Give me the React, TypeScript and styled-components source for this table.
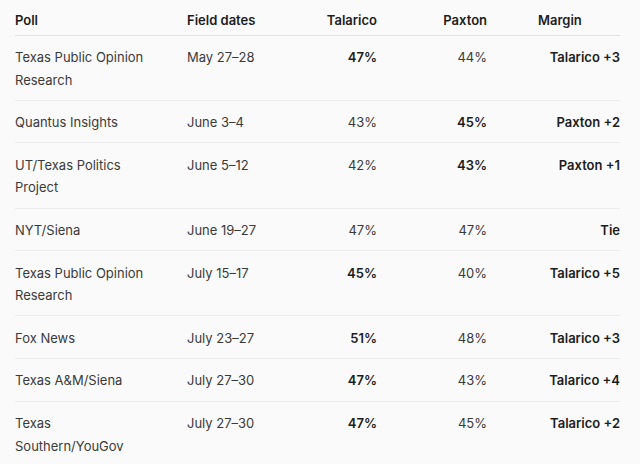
import styled, { createGlobalStyle } from 'styled-components';

interface Poll {
  name: string;
  dates: string;
  talarico: number;
  paxton: number;
  margin: string;
}

const polls: Poll[] = [
  { name: 'Texas Public Opinion Research', dates: 'May 27–28', talarico: 47, paxton: 44, margin: 'Talarico +3' },
  { name: 'Quantus Insights', dates: 'June 3–4', talarico: 43, paxton: 45, margin: 'Paxton +2' },
  { name: 'UT/Texas Politics Project', dates: 'June 5–12', talarico: 42, paxton: 43, margin: 'Paxton +1' },
  { name: 'NYT/Siena', dates: 'June 19–27', talarico: 47, paxton: 47, margin: 'Tie' },
  { name: 'Texas Public Opinion Research', dates: 'July 15–17', talarico: 45, paxton: 40, margin: 'Talarico +5' },
  { name: 'Fox News', dates: 'July 23–27', talarico: 51, paxton: 48, margin: 'Talarico +3' },
  { name: 'Texas A&M/Siena', dates: 'July 27–30', talarico: 47, paxton: 43, margin: 'Talarico +4' },
  { name: 'Texas Southern/YouGov', dates: 'July 27–30', talarico: 47, paxton: 45, margin: 'Talarico +2' },
];

const GlobalStyle = createGlobalStyle`
  html, body {
    margin: 0;
    padding: 0;
    background: #fafafa;
  }
  body {
    font-family: Inter, "Liberation Sans", sans-serif;
    -webkit-font-smoothing: antialiased;
  }
`;

const Page = styled.div`
  width: 640px;
  height: 464px;
  overflow: hidden;
  padding-left: 15px;
  box-sizing: border-box;
`;

const Table = styled.table`
  width: 605px;
  table-layout: fixed;
  border-collapse: collapse;
  font-size: 13px;
  color: #333;
`;

const HeadCell = styled.th<{ $align?: 'left' | 'right'; $inset?: number }>`
  font-weight: 600;
  color: #1d1d1f;
  text-align: ${p => p.$align || 'left'};
  padding: 9px 0 3px ${p => p.$inset || 0}px;
  line-height: 22.6px;
  border-bottom: 1px solid #e2e2e2;
`;

const Row = styled.tr`
  border-bottom: 1px solid #ececec;
`;

const Cell = styled.td<{ $align?: 'left' | 'right'; $strong?: boolean; $padRight?: number }>`
  vertical-align: top;
  padding: 10.5px ${p => p.$padRight || 0}px 8.5px 0;
  line-height: 22.6px;
  text-align: ${p => p.$align || 'left'};
  font-weight: ${p => (p.$strong ? 600 : 400)};
  color: ${p => (p.$strong ? '#1d1d1f' : '#3a3a3a')};
`;

export default function App() {
  return (
    <>
      <GlobalStyle />
      <Page>
        <Table>
          <colgroup>
            <col style={{ width: 172 }} />
            <col style={{ width: 120 }} />
            <col style={{ width: 70 }} />
            <col style={{ width: 110 }} />
            <col style={{ width: 133 }} />
          </colgroup>
          <thead>
            <tr>
              <HeadCell>Poll</HeadCell>
              <HeadCell>Field dates</HeadCell>
              <HeadCell $align="right">Talarico</HeadCell>
              <HeadCell $align="right">Paxton</HeadCell>
              <HeadCell $inset={51}>Margin</HeadCell>
            </tr>
          </thead>
          <tbody>
            {polls.map((p, i) => (
              <Row key={i}>
                <Cell $padRight={30}>{p.name}</Cell>
                <Cell>{p.dates}</Cell>
                <Cell $align="right" $strong={p.talarico > p.paxton}>{p.talarico}%</Cell>
                <Cell $align="right" $strong={p.paxton > p.talarico}>{p.paxton}%</Cell>
                <Cell $align="right" $strong>{p.margin}</Cell>
              </Row>
            ))}
          </tbody>
        </Table>
      </Page>
    </>
  );
}
